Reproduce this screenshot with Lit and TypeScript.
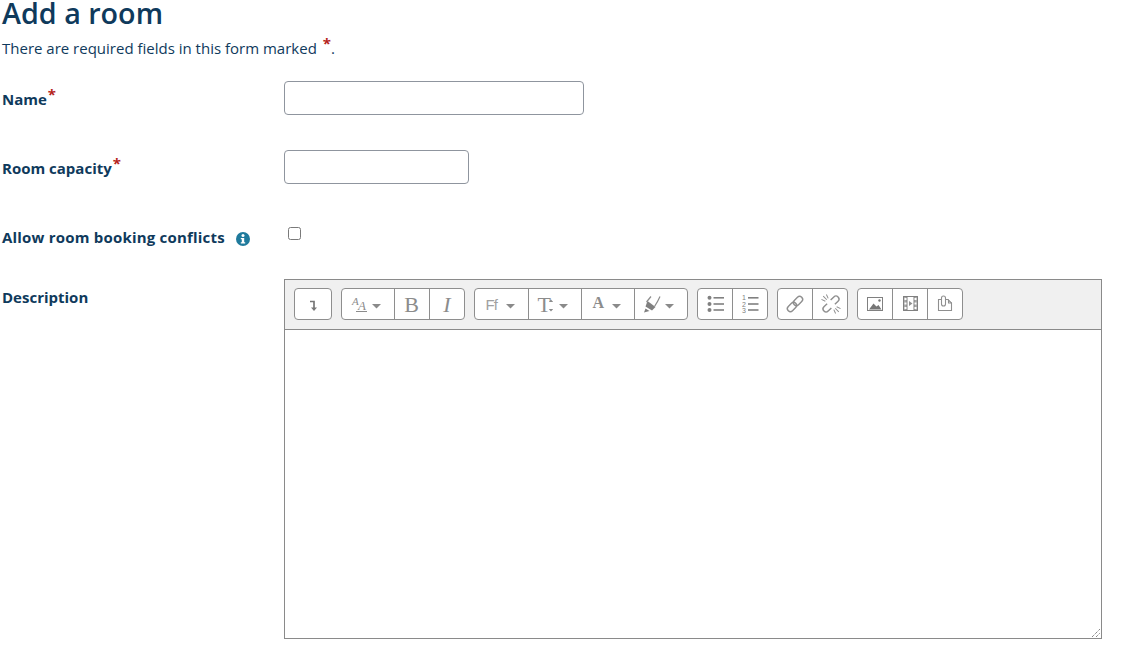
import { LitElement, html, css, svg } from "lit";
import { customElement } from "lit/decorators.js";

const G = "#8c8c8c";
const dd = (x: number) => svg`<path d="M${x} 15h9l-4.500 4.500z" fill="#8a8a8a"/>`;

const ic = {
  indent: svg`<path d="M15 12.500h4v7" fill="none" stroke="#777" stroke-width="1.700"/><path d="M16 18.500h6l-3 3.500z" fill="#777"/>`,
  styles: svg`<text x="10" y="16" class="serif it" font-size="11" fill="${G}">A</text><text x="16" y="21" class="serif it" font-size="13" fill="${G}">A</text><path d="M14 22.500h11" stroke="${G}"/>${dd(30)}`,
  bold: svg`<text x="16.500" y="23" text-anchor="middle" class="serif" font-size="22" fill="${G}">B</text>`,
  italic: svg`<text x="17" y="23" text-anchor="middle" class="serif it" font-size="22" fill="${G}">I</text>`,
  ff: svg`<text x="10.500" y="21" class="sans" font-size="15" letter-spacing="-1" fill="#a0a0a0">Ff</text>${dd(31)}`,
  size: svg`<text x="8.500" y="23" class="serif" font-size="22" fill="${G}">T</text><path d="M22 10.500l2.200 2.600h-4.400zM22 22.500l2.200-2.600h-4.400z" fill="${G}"/>${dd(30)}`,
  color: svg`<text x="10.500" y="19" class="serif b" font-size="16" fill="${G}">A</text>${dd(30)}`,
  high: svg`<path d="M12.500 12l8 6-3.500 3.500-6.500-4z" fill="#808080"/><path d="M10.500 19.500l4 2.500-5.500 1.500z" fill="#808080"/><path d="M11.500 13l4.500-5.500" fill="none" stroke="${G}" stroke-width="1.200"/><path d="M19.500 17.500c2-3 4-6.500 5.500-10" fill="none" stroke="${G}" stroke-width="1.200"/>${dd(30)}`,
  ul: svg`<g fill="#808080"><circle cx="11.500" cy="8.800" r="2"/><circle cx="11.500" cy="15" r="2"/><circle cx="11.500" cy="21" r="2"/><rect x="15.500" y="8" width="10.500" height="1.600"/><rect x="15.500" y="14.200" width="10.500" height="1.600"/><rect x="15.500" y="20.200" width="10.500" height="1.600"/></g>`,
  ol: svg`<g fill="#808080"><rect x="15" y="8" width="10.500" height="1.600"/><rect x="15" y="14.200" width="10.500" height="1.600"/><rect x="15" y="20.200" width="10.500" height="1.600"/></g><g class="sans" font-size="7" fill="#808080"><text x="9" y="11">1</text><text x="9" y="17.500">2</text><text x="9" y="24">3</text></g>`,
  link: svg`<g fill="none" stroke="#8f8f8f" stroke-width="1.400" transform="rotate(-45 17 15)"><rect x="7.500" y="12" width="10.500" height="6" rx="3"/><rect x="16" y="12" width="10.500" height="6" rx="3"/></g>`,
  unlink: svg`<g fill="none" stroke="#8f8f8f" stroke-width="1.400" transform="rotate(-45 18 15)"><path d="M15.500 12h-4.500a3 3 0 0 0 0 6h4.500M20.500 12h4.500a3 3 0 0 1 0 6h-4.500"/><path d="M18 4v5M14.500 5l1.500 4M21.500 5l-1.500 4M18 21v5M14.500 25l1.500-4M21.500 25l-1.500-4" stroke-width="1"/></g>`,
  image: svg`<rect x="9.500" y="8.500" width="15" height="13" fill="#fff" stroke="#808080"/><path d="M11 20.500l4.500-6 3 3 2-1.500 3 4.500z" fill="#777"/><circle cx="21.500" cy="11.500" r="1.200" fill="#777"/>`,
  video: svg`<rect x="10.500" y="7.500" width="14" height="14" fill="#fff" stroke="#808080"/><path d="M10.500 7.500h3.500v14h-3.500zM21 7.500h3.500v14H21z" fill="#a8a8a8" stroke="#808080"/><g fill="#fff"><rect x="11.500" y="9" width="2" height="2"/><rect x="11.500" y="13.500" width="2" height="2"/><rect x="11.500" y="18" width="2" height="2"/><rect x="21.500" y="9" width="2" height="2"/><rect x="21.500" y="13.500" width="2" height="2"/><rect x="21.500" y="18" width="2" height="2"/></g><path d="M16 12l3.500 2.500-3.500 2.500z" fill="#909090"/>`,
  file: svg`<g fill="none" stroke="#8f8f8f" stroke-width="1.100"><path d="M13 10.500h-2.500v11h13v-7.500l-3.500-3.500h-2.500"/><path d="M13.500 9v6a2 2 0 0 0 4 0V9a2 2 0 0 0-4 0z"/><path d="M20.500 10.500v3.500h3.500"/></g>`,
};

const groups: [number, keyof typeof ic][][] = [
  [[36, "indent"]],
  [[52, "styles"], [35, "bold"], [35, "italic"]],
  [[53, "ff"], [53, "size"], [53, "color"], [53, "high"]],
  [[34, "ul"], [35, "ol"]],
  [[34, "link"], [35, "unlink"]],
  [[34, "image"], [35, "video"], [35, "file"]],
];

@customElement("app-root")
export class AppRoot extends LitElement {
  static styles = css`
    :host {
      display: block;
      height: 661px;
      overflow: hidden;
      background: #fff;
      color: #0f3a5c;
      font-family: "Open Sans", "Noto Sans", sans-serif;
      font-size: 15px;
      padding-left: 2px;
      box-sizing: border-box;
    }
    h1 { margin: 0; font-size: 28.700px; font-weight: 600; line-height: 26px; height: 37px; }
    .intro { margin: 0; height: 44px; line-height: 22px; }
    .star { color: #b5241c; font-weight: 700; }
    .intro .star { font-size: 15px; position: relative; top: -5px; margin-left: 2px; }
    .row { display: grid; grid-template-columns: 282px 1fr; }
    .lab { font-weight: 700; font-size: 15px; display: flex; align-items: center; }
    .lab sup { color: #b5241c; font-size: 15px; line-height: 0; position: relative; top: -5px; margin-left: 1px; }
    .wide { letter-spacing: 0.2px; }
    input.text { display: block; box-sizing: border-box; height: 34px; border: 1px solid #8f959e; border-radius: 4px; background: #fff; padding: 0; margin: 0; }
    .name { width: 300px; }
    .cap { width: 185px; }
    .r1 { height: 69px; }
    .r2 { height: 69px; }
    .r3 { height: 60px; }
    .lt { height: 36px; }
    .ld { height: 36px; }
    .chk { width: 13px; height: 13px; box-sizing: border-box; margin: 8px 0 0 4px; border: 1px solid #7a7a7a; border-radius: 2.500px; background: #fff; }
    .info { margin-left: 11px; margin-top: 3px; display: block; letter-spacing: 0; }
    .ed { width: 818px; height: 360px; box-sizing: border-box; border: 1px solid #8a8a8a; position: relative; background: #fff; }
    .tb { height: 50px; box-sizing: border-box; background: #f0f0f0; border-bottom: 1px solid #8a8a8a; padding: 8px 9px 0; display: flex; gap: 9px; }
    .grp { display: flex; height: 32px; box-sizing: border-box; border: 1px solid #8e8e8e; border-radius: 4px; background: #fff; overflow: hidden; }
    .btn { height: 30px; display: block; }
    .btn + .btn { border-left: 1px solid #8e8e8e; }
    .btn svg { display: block; height: 30px; }
    .serif { font-family: "Liberation Serif", serif; }
    .sans { font-family: "Liberation Sans", sans-serif; }
    .it { font-style: italic; }
    .b { font-weight: 700; }
    .grip { position: absolute; right: 0; bottom: 0; }
  `;

  render() {
    return html`
      <h1>Add a room</h1>
      <p class="intro">There are required fields in this form marked <span class="star">*</span>.</p>
      <div class="row r1">
        <div class="lab lt">Name<sup>*</sup></div>
        <div><input class="text name" /></div>
      </div>
      <div class="row r2">
        <div class="lab lt">Room capacity<sup>*</sup></div>
        <div><input class="text cap" /></div>
      </div>
      <div class="row r3">
        <div class="lab lt wide">Allow room booking conflicts
          <svg class="info" width="14" height="14" viewBox="0 0 14 14">
            <circle cx="7" cy="7" r="7" fill="#1f7a9c"/>
            <circle cx="7" cy="3.500" r="1.500" fill="#fff"/>
            <path d="M4.800 6h3.400v4.300h1v1.200H4.800v-1.200h1V7.200h-1z" fill="#fff"/>
          </svg>
        </div>
        <div><div class="chk"></div></div>
      </div>
      <div class="row">
        <div class="lab ld">Description</div>
        <div class="ed">
          <div class="tb">
            ${groups.map(g => html`<div class="grp">
              ${g.map(([w, k], i) => html`<span class="btn"><svg width="${w - (i ? 1 : 0)}" height="30" viewBox="0 0 ${w - (i ? 1 : 0)} 30">${ic[k]}</svg></span>`)}
            </div>`)}
          </div>
          <svg class="grip" width="10" height="10" viewBox="0 0 10 10">
            <path d="M1 9l8-8M5 9l4-4" stroke="#555" stroke-width="1" stroke-dasharray="1 1" fill="none"/>
          </svg>
        </div>
      </div>
    `;
  }
}
